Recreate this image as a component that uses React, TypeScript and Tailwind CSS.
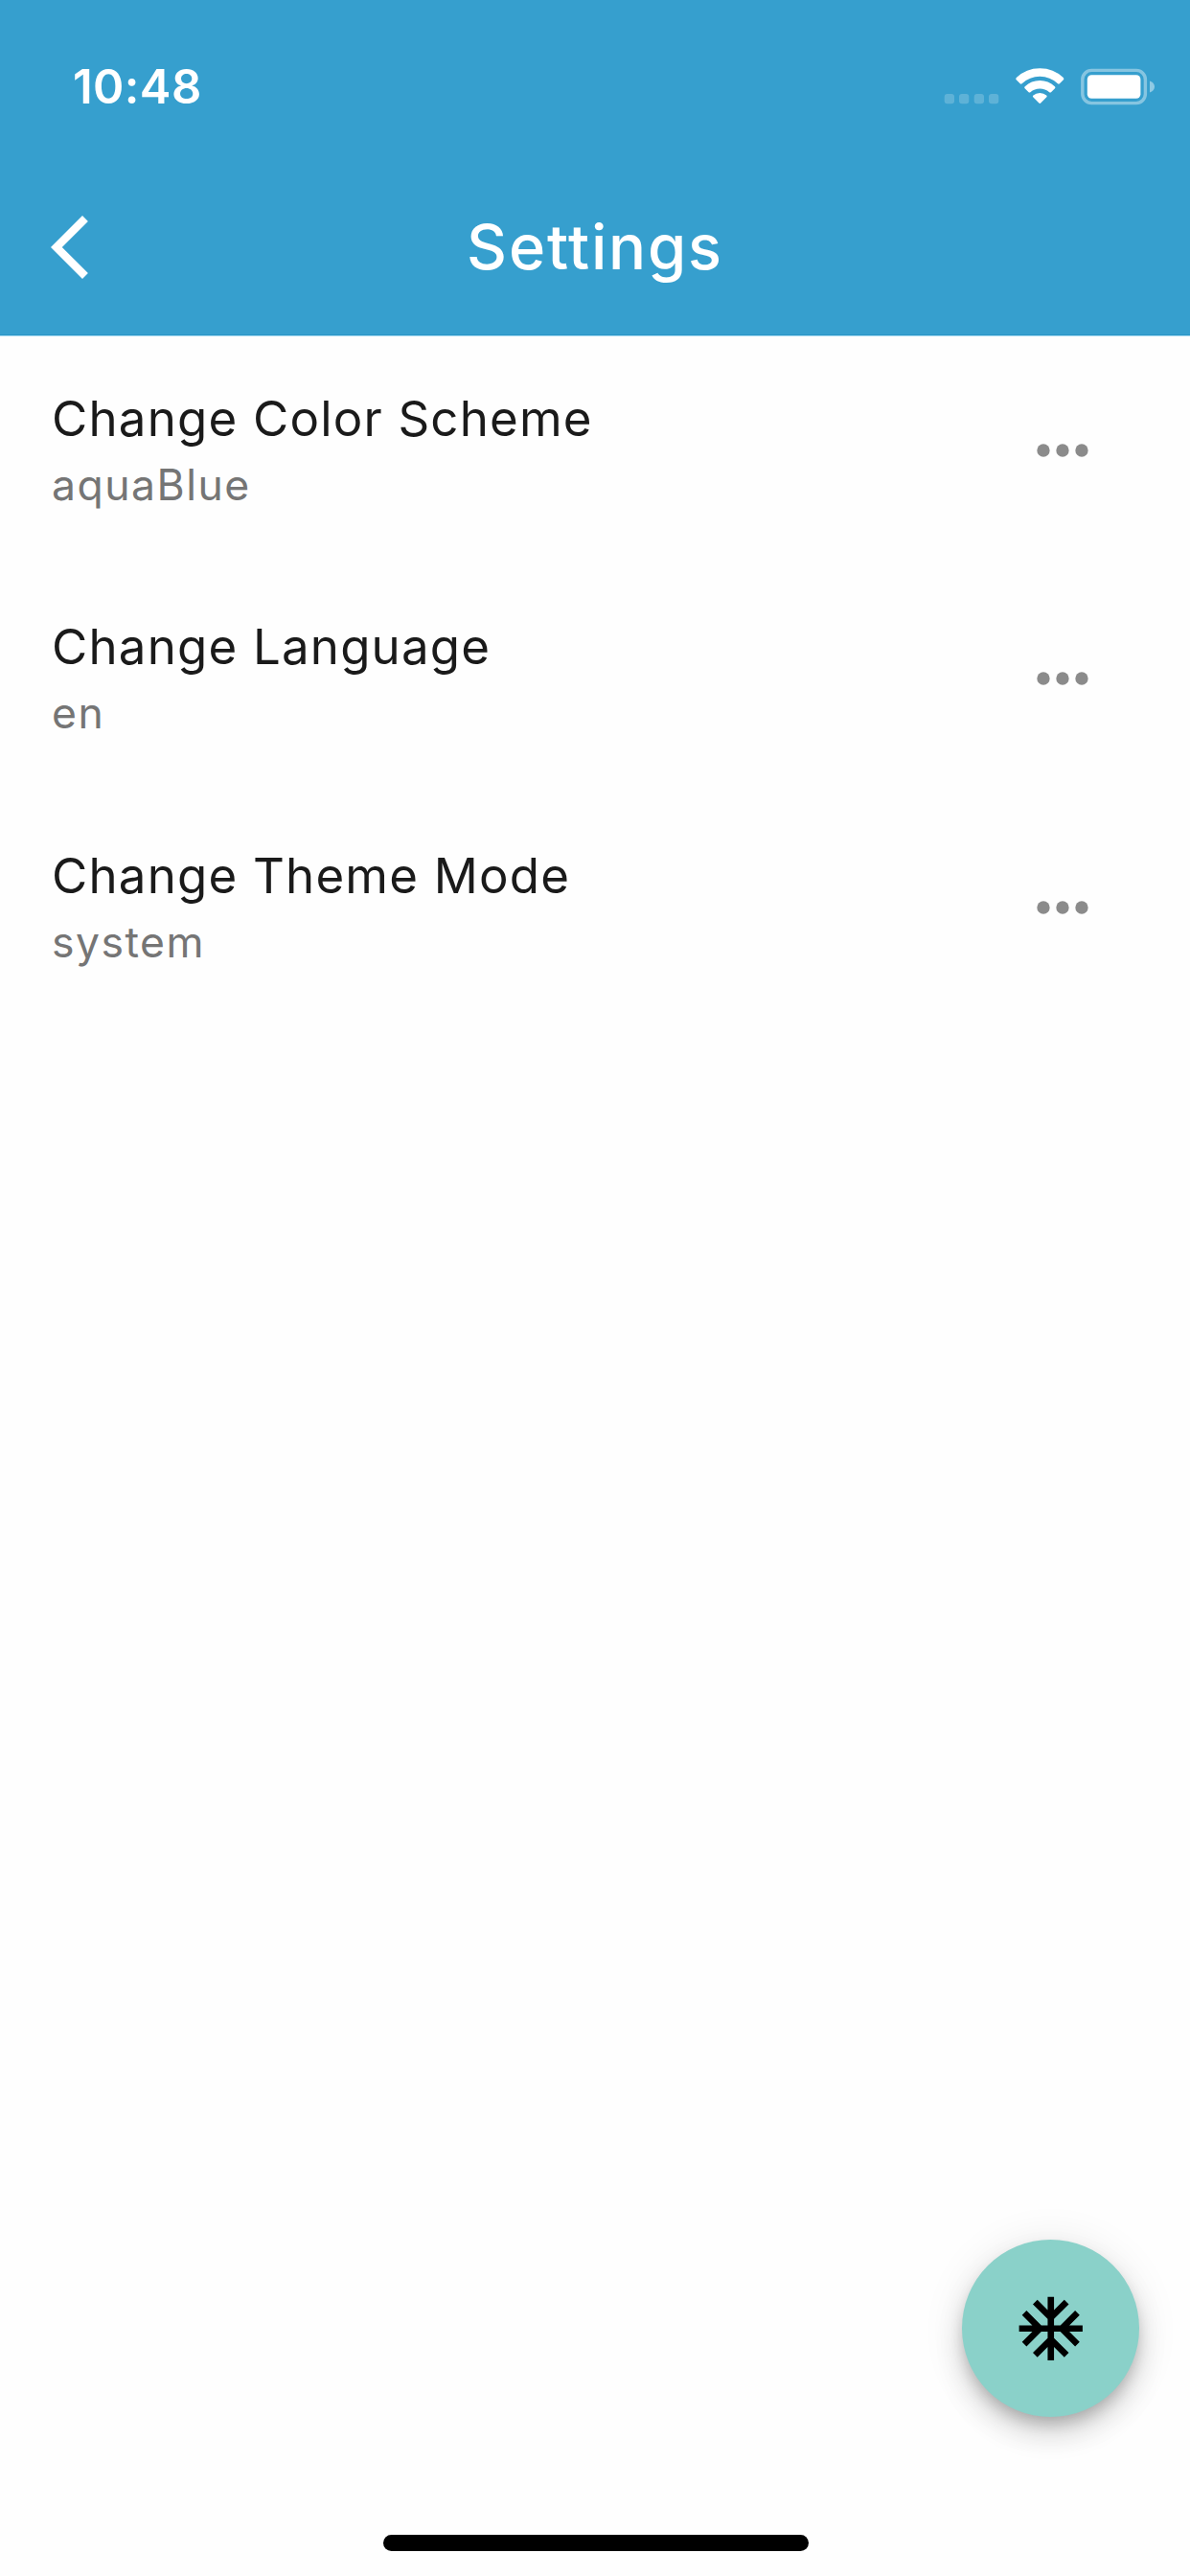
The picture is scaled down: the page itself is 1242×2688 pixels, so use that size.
const settings = [
  { title: "Change Color Scheme", value: "aquaBlue" },
  { title: "Change Language", value: "en" },
  { title: "Change Theme Mode", value: "system" },
];

function StatusIcons() {
  return (
    <svg className="h-[80px] w-[282px]" viewBox="0 0 282 80" fill="#fff">
      <g opacity="0.2">
        <rect x="25.7" y="48" width="10.3" height="10.3" rx="3" />
        <rect x="41" y="48" width="10.3" height="10.3" rx="3" />
        <rect x="56.7" y="48" width="10.3" height="10.3" rx="3" />
        <rect x="72" y="48" width="10.3" height="10.3" rx="3" />
      </g>
      <path d="M100.7 33.3Q99.6 32.2 100.8 31Q111 21.2 125.3 21.2Q139.6 21.2 149.8 31Q151 32.2 149.9 33.3L145.9 37.3Q145 38.2 144 37.3Q136 29.8 125.3 29.8Q114.6 29.8 106.6 37.3Q105.6 38.2 104.7 37.3Z" />
      <path d="M109.6 42.2Q108.6 41.2 109.7 40.2Q116.4 34 125.3 34Q134.2 34 140.9 40.2Q142 41.2 141 42.2L137 46.2Q136.1 47 135.2 46.2Q130.9 42.6 125.3 42.6Q119.7 42.6 115.4 46.2Q114.5 47 113.6 46.2Z" />
      <path d="M118.2 51.2Q117.4 50.4 118.4 49.6Q121.2 46.9 125.3 46.9Q129.4 46.9 132.2 49.6Q133.2 50.4 132.4 51.2L126.2 57.5Q125.3 58.4 124.4 57.5Z" />
      <rect x="169.8" y="23.4" width="65.6" height="34.2" rx="9.5" fill="none" stroke="#fff" strokeOpacity="0.4" strokeWidth="3.4" />
      <rect x="174.8" y="28.3" width="55.6" height="24.5" rx="4.5" />
      <path d="M240 34.5C243 35.5 245 37.8 245 40.5S243 45.500 240 46.5Z" opacity="0.45" />
    </svg>
  );
}

function SettingRow({ title, value }: { title: string; value: string }) {
  return (
    <li className="flex h-[238.3px] items-start justify-between pr-[92.7px] pl-[54px]">
      <div className="pt-[56px]">
        <div className="h-[60px] text-[51px] leading-[60px] tracking-[1.2px] whitespace-nowrap text-[#1a1a1a]">{title}</div>
        <div className="mt-[9px] h-[60px] text-[44.5px] leading-[60px] tracking-[1.5px] whitespace-nowrap text-[#757575]">{value}</div>
      </div>
      <svg className="mt-[79px] h-[80px] w-[80px]" viewBox="0 0 24 24" fill="#8b8b8b">
        <circle cx="6" cy="12" r="2" />
        <circle cx="12" cy="12" r="2" />
        <circle cx="18" cy="12" r="2" />
      </svg>
    </li>
  );
}

export default function App() {
  return (
    <div className="relative flex h-[2688px] w-[1242px] flex-col overflow-hidden bg-[#fefefe] font-['Inter',sans-serif]">
      <header className="h-[351px] w-full border-b border-[#a9dcf2] bg-[#369fce] text-white shadow-[inset_0_-1px_0_#2a96c6]">
        <div className="flex h-[170px] items-start justify-between">
          <div className="mt-[61px] ml-[76px] text-[49px] leading-[60px] font-semibold tracking-[0.4px]">10:48</div>
          <div className="mt-[50px]">
            <StatusIcons />
          </div>
        </div>
        <div className="grid h-[176px] grid-cols-[160px_1fr_160px] items-center">
          <svg className="ml-[53px] h-[80px] w-[80px]" viewBox="0 0 24 24" fill="#fff">
            <path d="M11.67 3.87 9.9 2.1 0 12l9.9 9.9 1.77-1.77L3.54 12z" />
          </svg>
          <h1 className="text-center text-[65px] leading-[80px] font-medium tracking-[1.8px]">Settings</h1>
        </div>
      </header>
      <ul>
        {settings.map((s) => (
          <SettingRow key={s.title} title={s.title} value={s.value} />
        ))}
      </ul>
      <button className="absolute top-[2337px] left-[1003.7px] flex h-[185.4px] w-[185.4px] items-center justify-center rounded-full bg-[#8ad1c9] shadow-[0_9px_15px_-3px_rgba(0,0,0,0.2),0_18px_30px_0_rgba(0,0,0,0.14),0_3px_46px_0_rgba(0,0,0,0.09)]">
        <svg className="h-[79.5px] w-[79.5px]" viewBox="0 0 24 24" fill="#000">
          <path d="M22 11h-4.17l3.24-3.24-1.41-1.42L15 11h-2V9l4.66-4.66-1.42-1.41L13 6.17V2h-2v4.17L7.76 2.93 6.34 4.34 11 9v2H9L4.34 6.34 2.93 7.76 6.17 11H2v2h4.17l-3.24 3.24 1.41 1.42L9 13h2v2l-4.66 4.66 1.42 1.41L11 17.83V22h2v-4.17l3.24 3.24 1.42-1.41L13 15v-2h2l4.66 4.66 1.41-1.42L17.83 13H22z" />
        </svg>
      </button>
      <div className="absolute bottom-[26.5px] left-[399.5px] h-[16.5px] w-[444px] rounded-full bg-black" />
    </div>
  );
}
